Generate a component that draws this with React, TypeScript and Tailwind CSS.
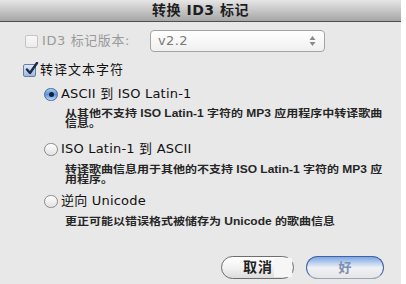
import React from "react";

const font = {
  fontFamily: '"DejaVu Sans", "Noto Sans CJK SC", sans-serif',
};

const smallFont = {
  fontFamily: '"Liberation Sans", "Noto Sans CJK SC", sans-serif',
};

function Checkbox({ checked, disabled }: { checked?: boolean; disabled?: boolean }) {
  if (disabled) {
    return (
      <span className="inline-block h-[13px] w-[13px] shrink-0 rounded-[2px] border border-[#c4c4c4] bg-gradient-to-b from-[#f8f8f8] to-[#ececec]" />
    );
  }
  return (
    <span className="relative inline-block h-[13px] w-[13px] shrink-0 rounded-[2px] border border-[#6b7f9c] bg-gradient-to-b from-[#dfe9f7] to-[#9fb9df]">
      {checked && (
        <svg className="absolute left-[1px] top-[-3px]" width="14" height="14" viewBox="0 0 14 14">
          <path d="M2 7.5 L5 11 L12 1" fill="none" stroke="#1a2a4a" strokeWidth="2.4" strokeLinecap="round" strokeLinejoin="round" />
        </svg>
      )}
    </span>
  );
}

function Radio({ selected }: { selected?: boolean }) {
  if (selected) {
    return (
      <span className="flex h-[13px] w-[14px] shrink-0 items-center justify-center rounded-full border border-[#4a6c9c] bg-gradient-to-b from-[#a8c8f0] via-[#5c93d8] to-[#b8d8f8]">
        <span className="h-[5px] w-[5px] rounded-full bg-[#10213d]" />
      </span>
    );
  }
  return (
    <span className="inline-block h-[13px] w-[14px] shrink-0 rounded-full border border-[#8a8a8a] bg-gradient-to-b from-[#ffffff] to-[#e2e2e2]" />
  );
}

function Option({
  selected,
  label,
  lines,
  gap,
}: {
  selected?: boolean;
  label: string;
  lines: string[];
  gap: string;
}) {
  return (
    <div className="flex flex-col">
      <div className="flex h-[16px] items-center pl-[44px]">
        <Radio selected={selected} />
        <span className="ml-[3px] whitespace-nowrap text-[13px] tracking-[0.2px] text-[#111]">{label}</span>
      </div>
      <div className={`${gap} flex flex-col items-start pl-[65px]`} style={smallFont}>
        {lines.map((line) => (
          <span
            className="h-[10px] origin-left scale-x-[1.2] whitespace-nowrap text-[10px] font-bold leading-[10px] text-[#262626]"
            key={line}
          >
            {line}
          </span>
        ))}
      </div>
    </div>
  );
}

export default function App() {
  return (
    <div className="flex h-[284px] w-[406px] bg-white" style={font}>
      <div className="flex h-[284px] w-[401px] flex-col bg-[#e8e8e8]">
        <div className="flex h-[22px] items-center justify-center border-b border-[#4e4e4e] bg-gradient-to-b from-[#e6e6e6] to-[#a6a6a6] text-[14px] font-bold tracking-[0.5px] text-[#1e1e1e]">
          转换 ID3 标记
        </div>

        <div className="mt-[8px] flex h-[22px] items-center pl-[25px]">
          <div className="flex w-[125px] items-center">
            <Checkbox disabled />
            <span className="ml-[4px] whitespace-nowrap text-[13px] tracking-[0.6px] text-[#9a9a9a]">ID3 标记版本:</span>
          </div>
          <div className="flex h-[22px] w-[175px] items-center justify-between rounded-[4px] border border-[#a4a4a4] bg-gradient-to-b from-[#ffffff] to-[#f0f0f0] pl-[7px] pr-[8px]">
            <span className="text-[13px] tracking-[0.4px] text-[#7a7a7a]">v2.2</span>
            <svg width="7" height="12" viewBox="0 0 7 12">
              <path d="M3.5 1 L6.5 5 L0.5 5 Z" fill="#8a8a8a" />
              <path d="M3.5 11 L6.5 7 L0.5 7 Z" fill="#8a8a8a" />
            </svg>
          </div>
        </div>

        <div className="mt-[10px] flex h-[16px] items-center pl-[23px]">
          <Checkbox checked />
          <span className="ml-[4px] whitespace-nowrap text-[13px] tracking-[1px] text-[#111]">转译文本字符</span>
        </div>

        <div className="mt-[8px]">
          <Option
            selected
            label="ASCII 到 ISO Latin-1"
            lines={["从其他不支持 ISO Latin-1 字符的 MP3 应用程序中转译歌曲", "信息。"]}
            gap="mt-[7px]"
          />
        </div>
        <div className="mt-[12px]">
          <Option
            label="ISO Latin-1 到 ASCII"
            lines={["转译歌曲信息用于其他的不支持 ISO Latin-1 字符的 MP3 应", "用程序。"]}
            gap="mt-[8px]"
          />
        </div>
        <div className="mt-[8px]">
          <Option
            label="逆向 Unicode"
            lines={["更正可能以错误格式被储存为 Unicode 的歌曲信息"]}
            gap="mt-[8px]"
          />
        </div>

        <div className="mt-[29px] flex items-start">
          <div className="ml-[221px] flex h-[23px] w-[73px] items-center rounded-full border border-[#6e6e6e] bg-gradient-to-b from-[#ffffff] via-[#f2f2f2] to-[#dcdcdc] pl-[21px]">
            <span className="text-[14px] font-bold tracking-[1px] text-[#222]">取消</span>
            <span className="ml-[1px] h-[19px] w-[18px] bg-[#f6f6f6]" />
          </div>
          <div className="ml-[12px] flex h-[23px] w-[78px] items-center justify-center rounded-full border border-[#3d64a8] border-b-[#9aa6b8] bg-gradient-to-b from-[#7ea6e0] via-[#eef1f6] to-[#e6e6e6]">
            <span className="text-[13px] font-bold text-[#7d8fb0]">好</span>
          </div>
        </div>
      </div>
    </div>
  );
}
